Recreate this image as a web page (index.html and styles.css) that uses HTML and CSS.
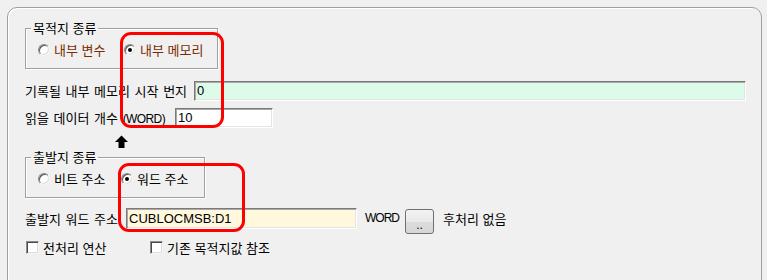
FILE: index.html
```html
<!DOCTYPE html>
<html lang="ko">
<head>
<meta charset="utf-8">
<link rel="stylesheet" href="styles.css">
</head>
<body>
<div class="panel">
  <fieldset class="group g1">
    <legend>목적지 종류</legend>
    <div class="radio-row brown">
      <label class="radio-item"><span class="radio"></span>내부 변수</label>
      <label class="radio-item"><span class="radio on"></span>내부 메모리</label>
    </div>
  </fieldset>

  <div class="row r1">
    <span class="lbl w169">기록될 내부 메모리 시작 번지</span>
    <div class="field mint wide">0</div>
  </div>
  <div class="row r2">
    <span class="lbl w150">읽을 데이터 개수 <span class="latin">(WORD)</span></span>
    <div class="field white short">10</div>
  </div>

  <svg class="arrow" width="13" height="13" viewBox="0 0 13 13">
    <polygon points="0,7 6.5,0.5 13,7" fill="#000"/>
    <rect x="3.5" y="6.5" width="6" height="6.5" fill="#000"/>
  </svg>

  <fieldset class="group g2">
    <legend>출발지 종류</legend>
    <div class="radio-row">
      <label class="radio-item"><span class="radio"></span>비트 주소</label>
      <label class="radio-item"><span class="radio on"></span>워드 주소</label>
    </div>
  </fieldset>

  <div class="row r3">
    <span class="lbl w101">출발지 워드 주소</span>
    <div class="field cream mid">CUBLOCMSB:D1</div>
    <span class="unit">WORD</span>
    <button class="btn">..</button>
    <span class="post">후처리 없음</span>
  </div>

  <div class="check-row">
    <label class="check-item"><span class="check"></span>전처리 연산</label>
    <label class="check-item"><span class="check"></span>기존 목적지값 참조</label>
  </div>
</div>

<div class="mark m1"></div>
<div class="mark m2"></div>
</body>
</html>
```
FILE: styles.css
```css
html, body {
  margin: 0;
  padding: 0;
  background: #f0f0f0;
  overflow: hidden;
  height: 280px;
}
body {
  font-family: "Noto Sans CJK KR", "Noto Sans", sans-serif;
  font-size: 13px;
  line-height: 14px;
  color: #000;
}
.panel {
  margin: 7px 0 0 7px;
  width: 755px;
  height: 320px;
  box-sizing: border-box;
  border: 1px solid #a0a0a0;
  border-radius: 10px 10px 0 0;
  box-shadow: inset 1px 1px 0 #fff;
  padding: 13px 0 0 17px;
}
.group {
  margin: 0;
  padding: 8px 0 11px 0;
  min-width: 0;
  border: 1px solid #a0a0a0;
  box-shadow: inset 1px 1px 0 #fff, 1px 1px 0 #fff;
  box-sizing: border-box;
}
.group legend {
  margin-left: 5px;
  padding: 0 2px;
  line-height: 14px;
  height: 14px;
}
.g1 { width: 193px; }
.g2 { width: 180px; margin-top: 2px; }
.radio-row {
  display: flex;
  align-items: center;
  height: 14px;
  padding-left: 12px;
}
.brown { color: #7b2d00; }
.radio-item {
  display: flex;
  align-items: center;
  gap: 4px;
  width: 86px;
  white-space: nowrap;
}
.radio {
  position: relative;
  width: 12px;
  height: 12px;
  box-sizing: border-box;
  border-radius: 50%;
  background: #fff;
  border: 1px solid;
  border-color: #8a8a8a #f4f4f4 #f4f4f4 #8a8a8a;
  box-shadow: inset 1px 1px 0 #5a5a5a, inset -1px -1px 0 #dcdcdc;
  flex: none;
}
.radio.on::after {
  content: "";
  position: absolute;
  left: 3px;
  top: 3px;
  width: 4px;
  height: 4px;
  border-radius: 50%;
  background: #000;
}
.row {
  display: flex;
  align-items: center;
}
.r1 { margin-top: 12px; height: 20px; }
.r2 { margin-top: 7px; height: 20px; }
.r3 { margin-top: 10px; height: 26px; align-items: flex-start; }
.lbl {
  white-space: nowrap;
  word-spacing: 1px;
  line-height: 20px;
}
.latin {
  font-family: "Liberation Sans", sans-serif;
  font-size: 12px;
  letter-spacing: -0.6px;
}
.w169 { width: 169px; }
.w150 { width: 150px; }
.w101 { width: 101px; line-height: 21px; }
.field {
  box-sizing: border-box;
  height: 20px;
  padding: 2px 0 0 2px;
  line-height: 14px;
  border: 1px solid;
  border-color: #7a7a7a #fff #fff #7a7a7a;
  box-shadow: inset 1px 1px 0 #a8a8a8, inset -1px -1px 0 #e4e4e4;
  font-family: "Liberation Sans", "Noto Sans CJK KR", sans-serif;
  font-size: 13px;
}
.mint { background: #dcfce9; }
.white { background: #fff; }
.cream { background: #fff8dc; height: 21px; padding-top: 3px; }
.wide { width: 552px; }
.short { width: 98px; }
.mid { width: 231px; }
.arrow {
  display: block;
  margin: 7px 0 0 90px;
}
.unit {
  margin-left: 8px;
  line-height: 21px;
  font-family: "Liberation Sans", sans-serif;
  font-size: 12px;
  letter-spacing: -1px;
}
.btn {
  margin: 1px 0 0 6px;
  width: 29px;
  height: 25px;
  padding: 6px 0 0;
  box-sizing: border-box;
  border: 1px solid #707070;
  border-radius: 3px;
  background: linear-gradient(#f3f3f3, #e9e9e9 50%, #dcdcdc 51%, #d6d6d6);
  font-family: "Liberation Sans", sans-serif;
  font-size: 12px;
  line-height: 14px;
  color: #000;
}
.post {
  margin-left: 9px;
  line-height: 21px;
  white-space: nowrap;
}
.check-row {
  display: flex;
  align-items: center;
  margin-top: 7px;
  height: 13px;
}
.check-item {
  display: flex;
  align-items: center;
  gap: 4px;
  white-space: nowrap;
}
.check-item:first-child { width: 124px; margin-left: 1px; }
.check {
  width: 13px;
  height: 13px;
  box-sizing: border-box;
  background: #fff;
  border: 1px solid;
  border-color: #8a8a8a #f4f4f4 #f4f4f4 #8a8a8a;
  box-shadow: inset 1px 1px 0 #4a4a4a, inset -1px -1px 0 #dcdcdc;
  flex: none;
}
.mark {
  position: absolute;
  box-sizing: border-box;
  border: 3px solid #f00;
  border-radius: 11px;
}
.m1 { left: 120px; top: 32px; width: 104px; height: 96px; }
.m2 { left: 118px; top: 163px; width: 127px; height: 69px; }
```
